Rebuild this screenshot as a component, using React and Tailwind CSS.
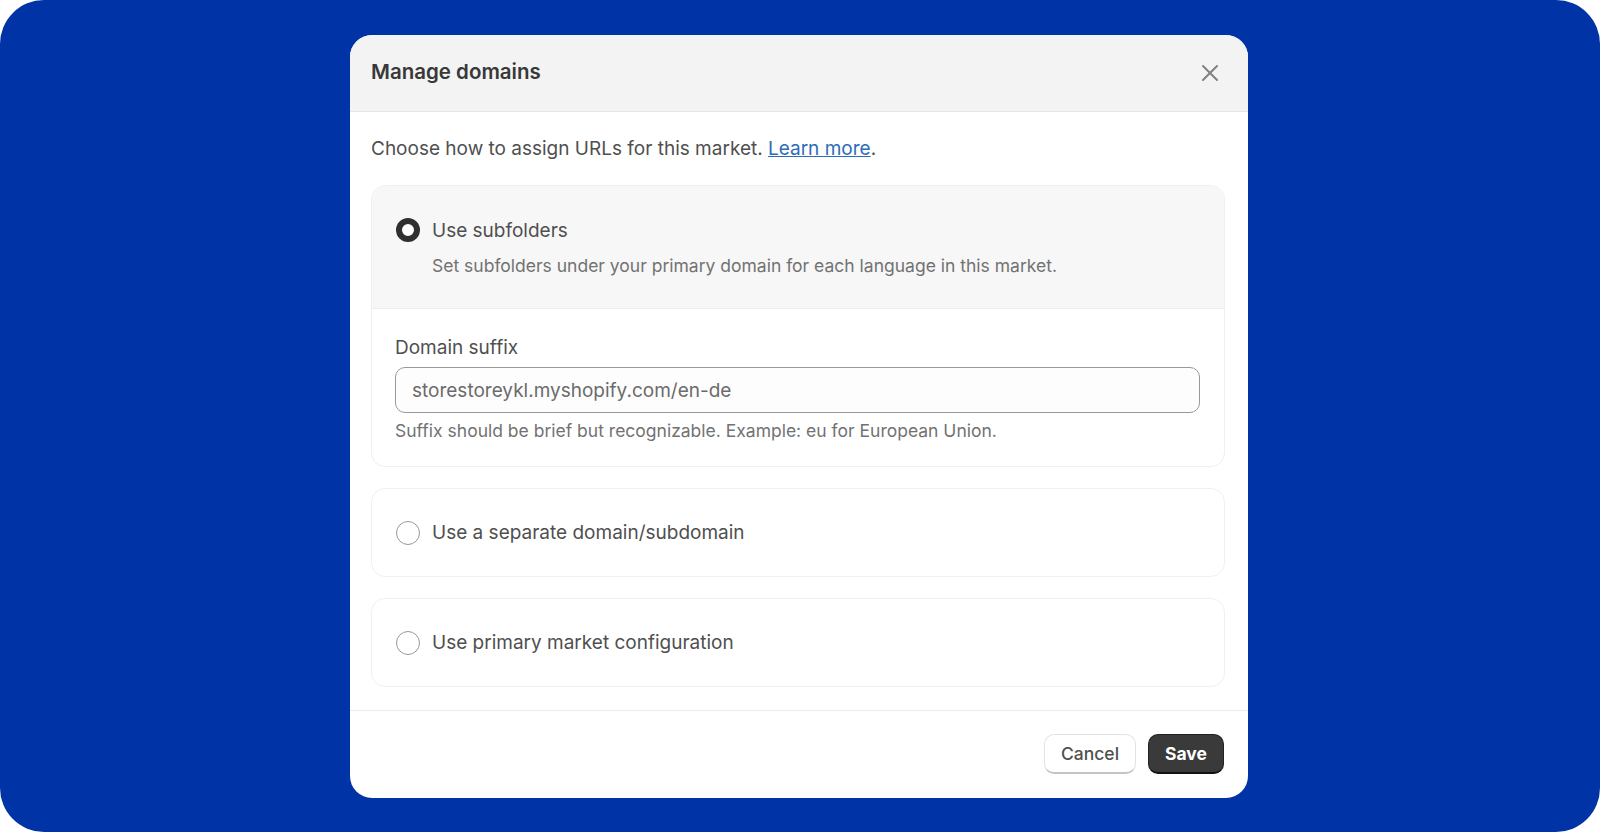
const FONT = "font-['Inter','Noto_Sans',sans-serif]";

function Radio({ checked }) {
  if (checked) return <span className="w-6 h-6 shrink-0 rounded-full border-[6px] border-[#303030] bg-white" />;
  return <span className="w-6 h-6 shrink-0 rounded-full border-[1.5px] border-[#999999] bg-white" />;
}

function OptionCard({ label }) {
  return (
    <div className="h-[89px] rounded-[14px] border border-[#f0f0f0] pl-6 pr-5 flex items-center gap-3">
      <Radio />
      <span className="pt-[2px] text-[19px] text-[#4f4f4f]">{label}</span>
    </div>
  );
}

export default function App() {
  return (
    <div className={`h-[832px] bg-white ${FONT}`}>
      <div className="h-full rounded-[44px] bg-[#0033a5] pt-[35px] pl-[350px]">
        <div className="w-[898px] h-[763px] rounded-[22px] bg-white overflow-hidden flex flex-col">
          <div className="h-[77px] shrink-0 bg-[#f3f3f3] border-b border-[#e6e6e6] pl-[21px] pr-[28px] pb-px flex items-center justify-between">
            <h1 className="text-[20.5px] font-semibold text-[#383838]">Manage domains</h1>
            <svg width="20" height="20" viewBox="0 0 20 20" fill="none" stroke="#808080" strokeWidth="2" strokeLinecap="round">
              <path d="M3 3l14 14M17 3L3 17" />
            </svg>
          </div>

          <div className="flex-1 pl-[21px] pr-[23px]">
            <p className="mt-[24px] h-[26px] leading-[26px] text-[19px] text-[#4f4f4f]">
              Choose how to assign URLs for this market. <a className="text-[#2b6cb8] underline">Learn more</a>.
            </p>

            <div className="mt-[23px] h-[282px] rounded-[14px] border border-[#f0f0f0] overflow-hidden">
              <div className="h-[123px] bg-[#f7f7f7] border-b border-[#ececec] px-6 pt-[32px]">
                <div className="flex items-center gap-3 h-6">
                  <Radio checked />
                  <span className="pt-[2px] text-[19px] text-[#4f4f4f]">Use subfolders</span>
                </div>
                <p className="ml-9 mt-[12px] text-[17.5px] leading-[24px] text-[#727272]">Set subfolders under your primary domain for each language in this market.</p>
              </div>
              <div className="pl-[23px] pr-6 pt-[27px]">
                <label className="block h-6 leading-6 text-[19px] text-[#4f4f4f]">Domain suffix</label>
                <div className="mt-[7px] h-[46px] rounded-[10px] border-[1.5px] border-[#999999] bg-[#fdfdfd] px-4 pt-[2px] flex items-center text-[19px] text-[#6b6b6b]">
                  storestoreykl.myshopify.com/en-de
                </div>
                <p className="mt-[6px] h-6 leading-6 text-[17.5px] text-[#727272]">Suffix should be brief but recognizable. Example: eu for European Union.</p>
              </div>
            </div>

            <div className="mt-[21px] flex flex-col gap-[21px]">
              <OptionCard label="Use a separate domain/subdomain" />
              <OptionCard label="Use primary market configuration" />
            </div>
          </div>

          <div className="h-[88px] shrink-0 border-t border-[#ececec] pr-6 flex items-start justify-end gap-3 pt-[23px]">
            <button className="h-10 w-[92px] pt-px rounded-[10px] border border-[#e3e3e3] border-b-2 border-b-[#c4c4c4] bg-white text-[17.5px] font-medium text-[#505050]">Cancel</button>
            <button className="h-10 w-[76px] pt-px rounded-[10px] border border-[#222222] border-b-2 border-b-[#111111] bg-[#3a3a3a] text-[17.5px] font-bold text-white">Save</button>
          </div>
        </div>
      </div>
    </div>
  );
}
